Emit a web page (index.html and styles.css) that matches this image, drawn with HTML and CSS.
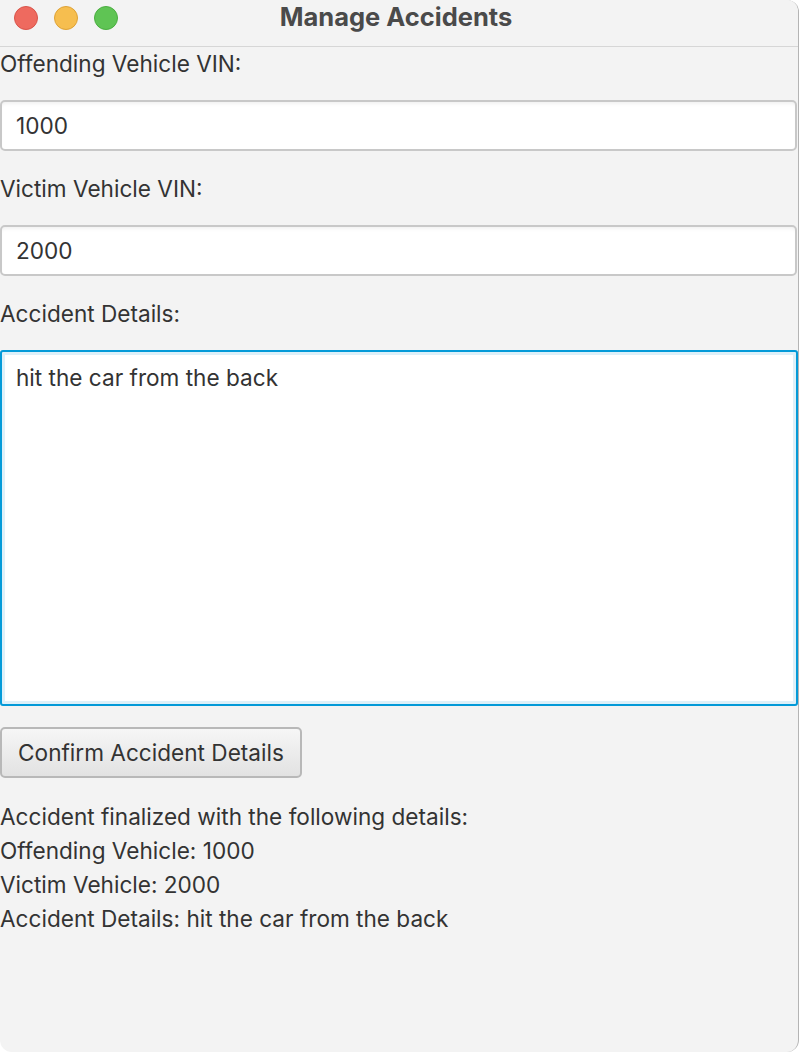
FILE: index.html
```html
<!DOCTYPE html>
<html>
<head>
<meta charset="utf-8">
<title>Manage Accidents</title>
<link rel="stylesheet" href="styles.css">
</head>
<body>
<div class="window">
  <div class="titlebar">
    <div class="lights">
      <span class="light red"></span>
      <span class="light yellow"></span>
      <span class="light green"></span>
    </div>
    <div class="title">Manage Accidents</div>
  </div>
  <div class="content">
    <div class="label">Offending Vehicle VIN:</div>
    <div class="field">1000</div>
    <div class="label">Victim Vehicle VIN:</div>
    <div class="field">2000</div>
    <div class="label">Accident Details:</div>
    <div class="area"><div class="area-inner">hit the car from the back</div></div>
    <div class="btn-row"><div class="button">Confirm Accident Details</div></div>
    <div class="output">
      <div class="line">Accident finalized with the following details:</div>
      <div class="line">Offending Vehicle: 1000</div>
      <div class="line">Victim Vehicle: 2000</div>
      <div class="line">Accident Details: hit the car from the back</div>
    </div>
  </div>
</div>
</body>
</html>
```
FILE: styles.css
```css
html, body {
  margin: 0;
  padding: 0;
  width: 802px;
  height: 1052px;
  overflow: hidden;
  background: #ffffff;
  font-family: Inter, "Noto Sans", "Liberation Sans", sans-serif;
}
.window {
  width: 798px;
  height: 1052px;
  background: #f3f3f3;
  border-right: 1px solid #b4b4b4;
  border-radius: 0 12px 12px 12px;
  display: flex;
  flex-direction: column;
  overflow: hidden;
}
.titlebar {
  height: 46px;
  border-bottom: 1px solid #d6d6d6;
  display: flex;
  align-items: center;
  position: relative;
  background: #f3f3f3;
}
.lights {
  display: flex;
  gap: 16px;
  padding-left: 14px;
  margin-top: -10px;
}
.light {
  width: 24px;
  height: 24px;
  border-radius: 50%;
  box-sizing: border-box;
}
.red { background: #ee6a5f; border: 1px solid #d9544a; }
.yellow { background: #f6be4f; border: 1px solid #dea236; }
.green { background: #5fc454; border: 1px solid #4aae40; }
.title {
  position: absolute;
  left: 0;
  right: 0;
  top: 1px;
  text-align: center;
  font-weight: 700;
  font-size: 25.5px;
  color: #4a4a4a;
  padding-right: 6px;
}
.content {
  display: flex;
  flex-direction: column;
  color: #333333;
  font-size: 22.6px;
}
.label {
  height: 34px;
  line-height: 34px;
}
.label + .field, .label + .area { margin-top: 19px; }
.field + .label, .area + .btn-row { margin-top: 21px; }
.field {
  height: 51px;
  box-sizing: border-box;
  background: #ffffff;
  border: 2px solid #c8c8c8;
  border-radius: 5px;
  margin-right: 1px;
  padding-left: 14px;
  line-height: 48px;
  box-shadow: inset 0 4px 4px -3px rgba(0,0,0,0.08);
}
.area {
  height: 356px;
  box-sizing: border-box;
  border: 2px solid #039ad8;
  border-radius: 3px;
  background: #ddf0f9;
  padding: 3px;
}
.area-inner {
  height: 100%;
  box-sizing: border-box;
  background: #ffffff;
  padding: 10px 11px;
  line-height: 26px;
}
.btn-row { display: flex; }
.button {
  height: 51px;
  box-sizing: border-box;
  width: 302px;
  border: 2px solid #b8b8b8;
  border-radius: 5px;
  background: linear-gradient(#f6f6f6, #e2e2e2);
  text-align: center;
  line-height: 47px;
}
.output {
  margin-top: 22px;
  display: flex;
  flex-direction: column;
}
.line {
  height: 34px;
  line-height: 34px;
}
```
